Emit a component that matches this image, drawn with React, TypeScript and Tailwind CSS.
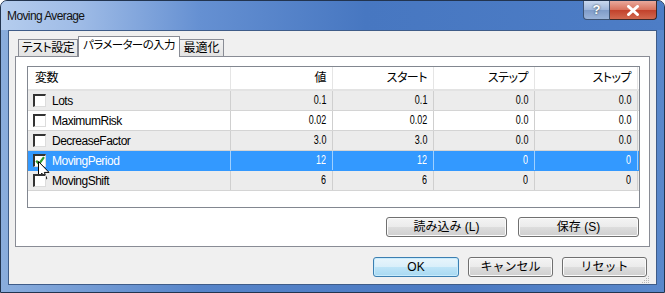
import React from "react";

type Row = { name: string; v: string[]; sel?: boolean; checked?: boolean };

const rows: Row[] = [
  { name: "Lots", v: ["0.1", "0.1", "0.0", "0.0"] },
  { name: "MaximumRisk", v: ["0.02", "0.02", "0.0", "0.0"] },
  { name: "DecreaseFactor", v: ["3.0", "3.0", "0.0", "0.0"] },
  { name: "MovingPeriod", v: ["12", "12", "0", "0"], sel: true, checked: true },
  { name: "MovingShift", v: ["6", "6", "0", "0"] },
];

const cols = "grid grid-cols-[203px_102px_101px_101px_103px]";

function CheckBox({ on }: { on?: boolean }) {
  return (
    <span className="relative w-[13px] h-[13px] shrink-0 bg-white border-t-2 border-l-2 border-r border-b border-t-[#333] border-l-[#333] border-r-[#dcdcdc] border-b-[#dcdcdc]">
      {on && (
        <svg viewBox="0 0 10 10" className="absolute left-0 top-0 w-[10px] h-[10px]">
          <path d="M1.2 4.8 L4 8 L9 1.2" fill="none" stroke="#2f9a2f" strokeWidth="2.2" />
        </svg>
      )}
    </span>
  );
}

function Btn({ children, w, primary }: { children: React.ReactNode; w: string; primary?: boolean }) {
  return (
    <button
      className={
        "h-[20px] rounded-[3px] border text-[12px] text-black flex items-center justify-center whitespace-nowrap " +
        w +
        (primary
          ? " border-[#3c7fb1] bg-[linear-gradient(#e8f5fc_0%,#d9effa_50%,#bee4f7_51%,#a8d9f2_100%)] shadow-[inset_0_0_0_1px_#c8ecfd]"
          : " border-[#707070] bg-[linear-gradient(#f4f4f4_0%,#ebebeb_50%,#dddddd_51%,#cfcfcf_100%)] shadow-[inset_0_0_0_1px_#fbfbfb]")
      }
    >
      {children}
    </button>
  );
}

function Cursor() {
  return (
    <svg viewBox="0 0 13 20" className="absolute left-[10px] top-[10px] w-[13px] h-[20px]">
      <path
        d="M0.5 0.5 L0.5 15.5 L4 12.2 L6.6 18.5 L8.8 17.6 L6.3 11.4 L11 11.4 Z"
        fill="#fff"
        stroke="#000"
        strokeWidth="1"
        strokeLinejoin="round"
      />
    </svg>
  );
}

export default function App() {
  return (
    <div className="w-[665px] h-[293px] flex flex-col rounded-t-[7px] border border-[#22344f] bg-[linear-gradient(90deg,#8aaddd_0%,#5684c9_30%,#4a79c2_70%,#5a88cb_100%)] px-[7px] pb-[7px] font-['Liberation_Sans','Noto_Sans_CJK_JP',sans-serif] select-none">
      {/* title bar */}
      <div className="h-[29px] flex justify-between shrink-0 -mx-[7px] pl-[6px] pr-[7px] bg-[linear-gradient(90deg,#b5cdee_0%,#9ebbe6_12%,#6590d2_30%,#4777c1_55%,#4d7dc6_100%)] rounded-t-[6px]">
        <span className="mt-[6px] text-[12px] tracking-[-0.6px] text-[#111]">Moving Average</span>
        <div className="flex h-[19px]">
          <div className="w-[27px] rounded-bl-[4px] border border-t-0 border-[#3d5374] bg-[linear-gradient(#c9d8ee,#9fb6da_50%,#7f9bc8_51%,#9bb4da)] flex items-center justify-center text-white text-[13px] font-bold [text-shadow:0_0_2px_#233]">
            ?
          </div>
          <div className="w-[47px] rounded-br-[4px] border border-t-0 border-l-0 border-[#3d2a2a] bg-[linear-gradient(#e9a99c,#d8705b_50%,#c2412b_51%,#d2694f)] flex items-center justify-center">
            <svg viewBox="0 0 14 12" className="w-[14px] h-[11px]">
              <path d="M2 1.5 L12 10.5 M12 1.5 L2 10.5" stroke="#fff" strokeWidth="3" strokeLinecap="round" />
            </svg>
          </div>
        </div>
      </div>

      {/* client */}
      <div className="flex-1 flex flex-col bg-[#f0f0f0] border border-[#3f5c88] px-[6px] pt-[5px]">
        {/* tabs */}
        <div className="flex items-end h-[20px] pl-[3px] text-[12px] text-black whitespace-nowrap [font-feature-settings:'palt']">
          <div className="w-[60px] h-[17px] border border-b-0 border-[#898c95] bg-[linear-gradient(#f2f2f2,#e3e3e3)] flex items-center justify-center tracking-[-0.5px]">
            テスト設定
          </div>
          <div className="relative z-10 w-[102px] h-[21px] -mb-px border border-b-0 border-[#898c95] bg-white flex items-center justify-center pb-[2px] text-[11.5px] tracking-[-0.6px]">
            パラメーターの入力
          </div>
          <div className="w-[44px] h-[17px] border border-b-0 border-l-0 border-[#898c95] bg-[linear-gradient(#f2f2f2,#e3e3e3)] flex items-center justify-center">
            最適化
          </div>
        </div>

        {/* panel */}
        <div className="h-[191px] border border-[#898c95] bg-white pt-[9px] pl-[11px] pr-[9px] flex flex-col">
          <div className="h-[142px] border border-[#828790] bg-white text-[12px] text-black">
            <div className={cols + " h-[24px] border-b-2 border-[#e3e3e3] [font-feature-settings:'palt'] tracking-[-0.5px]"}>
              <div className="border-r border-[#e5e5e5] flex items-center pl-[7px]">変数</div>
              <div className="border-r border-[#e5e5e5] flex items-center justify-end pr-[6px]">値</div>
              <div className="border-r border-[#e5e5e5] flex items-center justify-end pr-[6px]">スタート</div>
              <div className="border-r border-[#e5e5e5] flex items-center justify-end pr-[6px]">ステップ</div>
              <div className="border-r border-[#e5e5e5] flex items-center justify-end pr-[6px]">ストップ</div>
            </div>
            {rows.map((r, i) => (
              <div
                key={r.name}
                className={
                  cols +
                  " h-[20px] border-b " +
                  (r.sel
                    ? "bg-[#3399ff] text-white border-[#3399ff]"
                    : i % 2 === 0
                    ? "bg-[#ececec] border-[#d4d4d4]"
                    : "bg-white border-[#d4d4d4]")
                }
              >
                <div
                  className={
                    "relative flex items-center gap-[6px] pl-[5px] border-r tracking-[-0.5px] " +
                    (r.sel ? "border-[#9fd0ff]" : "border-[#cfcfcf]")
                  }
                >
                  <CheckBox on={r.checked} />
                  <span>{r.name}</span>
                  {r.sel && <Cursor />}
                </div>
                {r.v.map((v, j) => (
                  <div
                    key={j}
                    className={
                      "flex items-center justify-end pr-[6px] border-r " +
                      (r.sel ? "border-[#9fd0ff]" : "border-[#cfcfcf]")
                    }
                  >
                    <span className="inline-block text-[12.5px] scale-x-[0.72] origin-right">{v}</span>
                  </div>
                ))}
              </div>
            ))}
          </div>
          <div className="flex justify-end gap-[11px] mt-[9px] pr-[1px]">
            <Btn w="w-[121px]">読み込み (L)</Btn>
            <Btn w="w-[121px]">保存 (S)</Btn>
          </div>
        </div>

        {/* dialog buttons */}
        <div className="relative flex-1 flex justify-end items-start gap-[9px] pt-[10px] pr-[3px]">
          <Btn w="w-[86px]" primary>
            OK
          </Btn>
          <Btn w="w-[85px]">キャンセル</Btn>
          <Btn w="w-[85px]">リセット</Btn>
          <svg viewBox="0 0 8 8" className="absolute right-0 bottom-0 w-[8px] h-[8px]">
            <g fill="#b8b8b8">
              <rect x="6" y="0" width="1" height="1" />
              <rect x="4" y="2" width="1" height="1" />
              <rect x="6" y="2" width="1" height="1" />
              <rect x="2" y="4" width="1" height="1" />
              <rect x="4" y="4" width="1" height="1" />
              <rect x="6" y="4" width="1" height="1" />
              <rect x="0" y="6" width="1" height="1" />
              <rect x="2" y="6" width="1" height="1" />
              <rect x="4" y="6" width="1" height="1" />
              <rect x="6" y="6" width="1" height="1" />
            </g>
          </svg>
        </div>
      </div>
    </div>
  );
}
